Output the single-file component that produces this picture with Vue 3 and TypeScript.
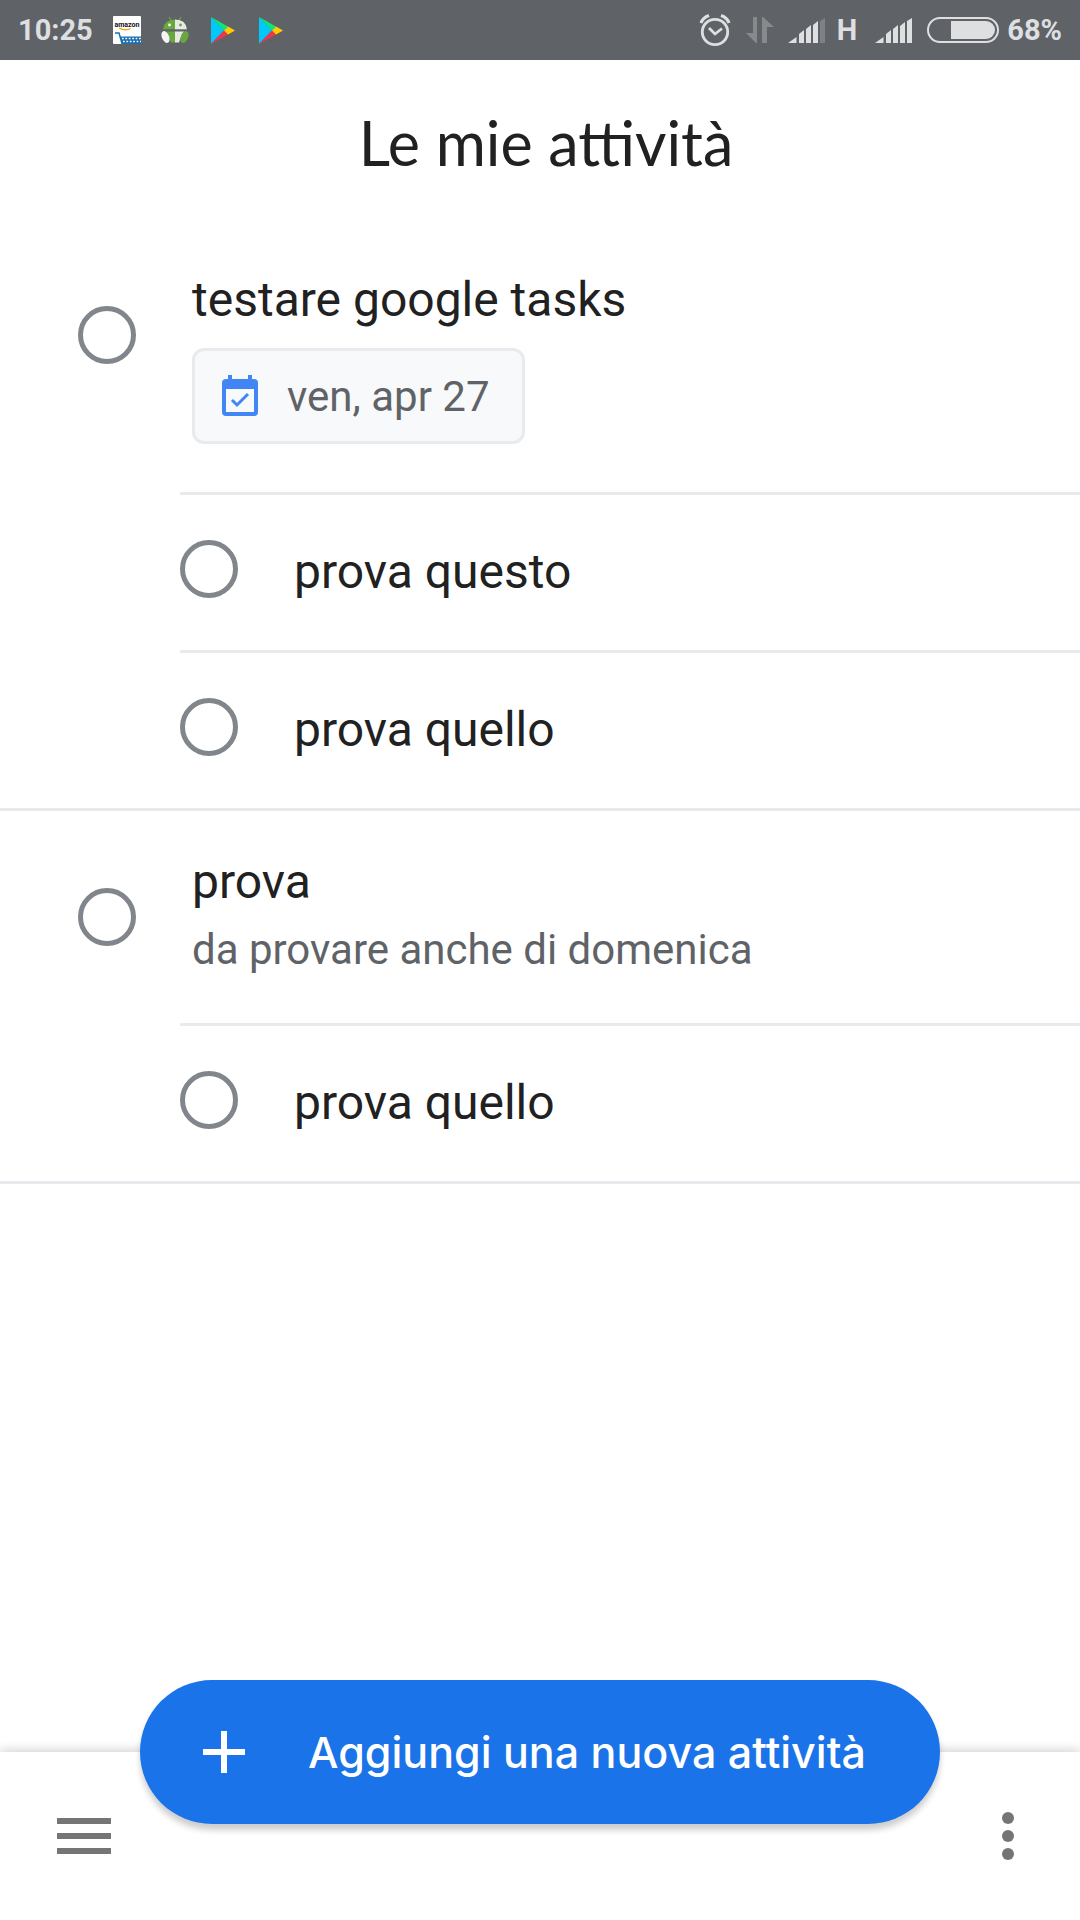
<script setup lang="ts">
import { ref } from 'vue'

interface Subtask {
  id: string
  title: string
  done: boolean
}

interface Task extends Subtask {
  note?: string
  due?: string
  subtasks: Subtask[]
}

const tasks = ref<Task[]>([
  {
    id: 't1',
    title: 'testare google tasks',
    due: 'ven, apr 27',
    done: false,
    subtasks: [
      { id: 't1-1', title: 'prova questo', done: false },
      { id: 't1-2', title: 'prova quello', done: false },
    ],
  },
  {
    id: 't2',
    title: 'prova',
    note: 'da provare anche di domenica',
    done: false,
    subtasks: [{ id: 't2-1', title: 'prova quello', done: false }],
  },
])
</script>

<template>
  <div class="screen">
    <div class="status">
      <div class="status-left">
        <span class="time">10:25</span>
        <svg class="notif" viewBox="0 0 28 28" aria-hidden="true">
          <rect width="28" height="28" rx="1" fill="#fff" />
          <text x="14" y="11" text-anchor="middle" class="brand">amazon</text>
          <path d="M6 12Q12 15.500 17.500 12.500" fill="none" stroke="#f90" stroke-width="1.300" />
          <path d="M2 17h4l3 10.500h19" fill="none" stroke="#1a6fae" stroke-width="1.500" />
          <path d="M7 20.500h21v7H9z" fill="#1a6fae" />
          <path d="M9 22.500h19M10 25.500h18" stroke="#fff" stroke-width="1.500" stroke-dasharray="1.700 1.700" />
        </svg>
        <svg class="notif" viewBox="0 0 28 28" aria-hidden="true">
          <path d="M8 1l3 4.500M20 1l-3 4.500" stroke="#69a83c" stroke-width="1.200" />
          <path d="M2 13.500Q3 3.500 14 3.500v10z" fill="#69a83c" />
          <path d="M14 3.500Q25 3.500 26 13.500H14z" fill="#e8eae8" />
          <circle cx="8.500" cy="9" r="1.400" fill="#fff" />
          <circle cx="19.500" cy="9" r="1.400" fill="#69a83c" />
          <path d="M5 15.500h9v11h-4L7 18z" fill="#69a83c" />
          <path d="M14 15.500h9L21 18l-3 8.500h-4z" fill="#e8eae8" />
          <ellipse cx="4.500" cy="21" rx="3.600" ry="6.300" transform="rotate(-22 4.500 21)" fill="#f4f4f4" />
          <ellipse cx="23.500" cy="21" rx="3.600" ry="6.300" transform="rotate(22 23.500 21)" fill="#69a83c" />
          <path d="M1 14.300h26" stroke="#5f6368" stroke-width="1.400" />
        </svg>
        <svg v-for="n in 2" :key="n" class="notif play" viewBox="0 0 28 28" aria-hidden="true">
          <path d="M2 1v27L15 14.500z" fill="#00c8fa" />
          <path d="M2 1l17 9.500-4 4z" fill="#0de67a" />
          <path d="M2 28l17-9.500-4-4z" fill="#f43249" />
          <path d="M19 10.500l7 4-7 4-4-4z" fill="#fc0" />
        </svg>
      </div>
      <div class="status-right">
        <svg width="32" height="34" viewBox="0 0 32 34" aria-hidden="true">
          <g fill="none" stroke="#dedfe1">
            <circle cx="16" cy="19" r="12.700" stroke-width="2.800" />
            <path d="M2 10Q4 4.500 10 2.500M30 10Q28 4.500 22 2.500" stroke-width="3.200" />
            <path d="M10 15l6 6 7-5.500" stroke-width="2.800" />
          </g>
        </svg>
        <svg width="28" height="28" viewBox="0 0 28 28" class="arrows" aria-hidden="true">
          <path d="M7 1h4v26h-1L0 17h7zM16 27V1h1l11 10h-7v16z" fill="#868a8d" />
        </svg>
        <svg width="37" height="28" viewBox="0 0 37 28" class="signal-a" aria-hidden="true">
          <path d="M0 27l8.500-6v6zM11 27V18l5-4v13zM18 27V13l5-4v18zM25 27V9l5-4v22z" fill="#dedfe1" />
          <path d="M32 27V5l5-3v25z" fill="#7e8286" />
        </svg>
        <span class="net">H</span>
        <svg width="37" height="28" viewBox="0 0 37 28" class="signal-b" aria-hidden="true">
          <path d="M0 27l8.500-6v6zM11 27V18l5-4v13zM18 27V13l5-4v18zM25 27V10l5-4v21zM32 27V5l5-3v25z" fill="#dedfe1" />
        </svg>
        <svg width="72" height="28" viewBox="0 0 72 28" class="battery" aria-hidden="true">
          <rect x="1" y="2" width="70" height="24" rx="12" fill="none" stroke="#dedfe1" stroke-width="2" />
          <path d="M24 5h35a9 9 0 0 1 0 18H24z" fill="#dedfe1" />
        </svg>
        <span class="percent">68%</span>
      </div>
    </div>

    <header class="head">
      <h1>Le mie attività</h1>
    </header>

    <main class="list">
      <section v-for="task in tasks" :key="task.id" class="group">
        <div class="task">
          <input :id="task.id" v-model="task.done" type="checkbox" class="tick" />
          <div class="body">
            <label :for="task.id" class="name">{{ task.title }}</label>
            <p v-if="task.note" class="note">{{ task.note }}</p>
            <button v-if="task.due" type="button" class="chip">
              <svg width="36" height="42" viewBox="0 0 36 42" aria-hidden="true">
                <path
                  fill="#4285f4"
                  fill-rule="evenodd"
                  d="M6 0h4v4h16V0h4v4h2a4 4 0 0 1 4 4v29a4 4 0 0 1-4 4H4a4 4 0 0 1-4-4V8a4 4 0 0 1 4-4h2zM4 14v23h28V14z"
                />
                <path d="M10 25l5 5 11-11" fill="none" stroke="#4285f4" stroke-width="3" />
              </svg>
              <span>{{ task.due }}</span>
            </button>
          </div>
        </div>
        <div v-for="sub in task.subtasks" :key="sub.id" class="sub">
          <input :id="sub.id" v-model="sub.done" type="checkbox" class="tick" />
          <label :for="sub.id" class="name">{{ sub.title }}</label>
        </div>
      </section>
    </main>

    <footer class="bar">
      <button type="button" class="icon-btn" aria-label="Menu">
        <svg width="54" height="36" viewBox="0 0 54 36">
          <path d="M0 0h54v6H0zM0 15h54v6H0zM0 30h54v6H0z" fill="#757575" />
        </svg>
      </button>
      <button type="button" class="add">
        <svg width="42" height="42" viewBox="0 0 42 42" aria-hidden="true">
          <path d="M18 0h6v18h18v6H24v18h-6V24H0v-6h18z" fill="#fff" />
        </svg>
        <span>Aggiungi una nuova attività</span>
      </button>
      <button type="button" class="icon-btn" aria-label="Altro">
        <svg width="12" height="48" viewBox="0 0 12 48">
          <g fill="#757575">
            <circle cx="6" cy="6" r="6" />
            <circle cx="6" cy="24" r="6" />
            <circle cx="6" cy="42" r="6" />
          </g>
        </svg>
      </button>
    </footer>
  </div>
</template>

<style>
body {
  margin: 0;
  background: #fff;
}
</style>

<style scoped>
.screen {
  display: flex;
  flex-direction: column;
  min-height: 100vh;
  background: #fff;
  color: #212121;
  font-family: Roboto, 'Liberation Sans', sans-serif;
}

button {
  border: 0;
  padding: 0;
  background: none;
  font: inherit;
  color: inherit;
}

svg {
  display: block;
  flex: none;
}

.status {
  display: flex;
  justify-content: space-between;
  align-items: center;
  height: 60px;
  padding: 0 18px;
  background: #5f6368;
  color: #dedfe1;
  font-size: 29px;
  font-weight: 700;
  line-height: 60px;
}

.status-left,
.status-right {
  display: flex;
  align-items: center;
}

.status-left {
  gap: 20px;
}

.notif {
  width: 28px;
  height: 28px;
}

.brand {
  font-size: 7px;
  font-weight: 700;
  fill: #111;
}

.arrows {
  margin-left: 15px;
}

.signal-a {
  margin-left: 14px;
}

.net {
  margin-left: 12px;
}

.signal-b {
  margin-left: 18px;
}

.battery {
  margin: 0 8px 0 15px;
}

.head {
  padding: 47px 24px 50px 36px;
}

h1 {
  margin: 0;
  font-family: Lato, 'Open Sans', sans-serif;
  font-size: 61px;
  font-weight: 400;
  line-height: 72px;
  text-align: center;
}

.list {
  flex: 1;
}

.group {
  border-bottom: 3px solid #e8eaed;
}

.task {
  display: flex;
  align-items: flex-start;
  gap: 56px;
  padding: 42px 24px 48px 78px;
}

.task .tick {
  margin-top: 35px;
}

.tick {
  appearance: none;
  flex: none;
  box-sizing: border-box;
  width: 58px;
  height: 58px;
  margin: 0;
  border: 5px solid #80868b;
  border-radius: 50%;
}

.tick:checked {
  background: #80868b;
}

.name {
  display: block;
  font-size: 48px;
  line-height: 58px;
}

.note {
  margin: 14px 0 0;
  color: #5f6368;
  font-size: 42px;
  line-height: 50px;
}

.chip {
  display: flex;
  align-items: center;
  gap: 29px;
  box-sizing: border-box;
  height: 96px;
  margin-top: 19px;
  padding: 0 32px 0 27px;
  border: 3px solid #e8eaed;
  border-radius: 12px;
  background: #f8f9fa;
  color: #5f6368;
  font-size: 42px;
}

.sub {
  display: flex;
  align-items: flex-start;
  gap: 56px;
  margin-left: 180px;
  padding: 45px 24px 49px 0;
  border-top: 3px solid #e8eaed;
}

.sub .name {
  padding-top: 3px;
}

.bar {
  position: relative;
  display: flex;
  justify-content: space-between;
  align-items: center;
  height: 168px;
  padding: 0 66px 0 57px;
  background: #fff;
  box-shadow: 0 -2px 10px rgba(0, 0, 0, 0.18);
}

.add {
  position: absolute;
  top: -72px;
  left: 50%;
  display: flex;
  align-items: center;
  gap: 63px;
  box-sizing: border-box;
  height: 144px;
  width: calc(100% - 280px);
  padding: 0 63px;
  transform: translateX(-50%);
  border-radius: 72px;
  background: #1a73e8;
  box-shadow: 0 6px 6px rgba(0, 0, 0, 0.2);
  color: #fff;
  font-family: Inter, 'Open Sans', sans-serif;
  font-size: 43px;
  font-weight: 500;
  white-space: nowrap;
}
</style>
